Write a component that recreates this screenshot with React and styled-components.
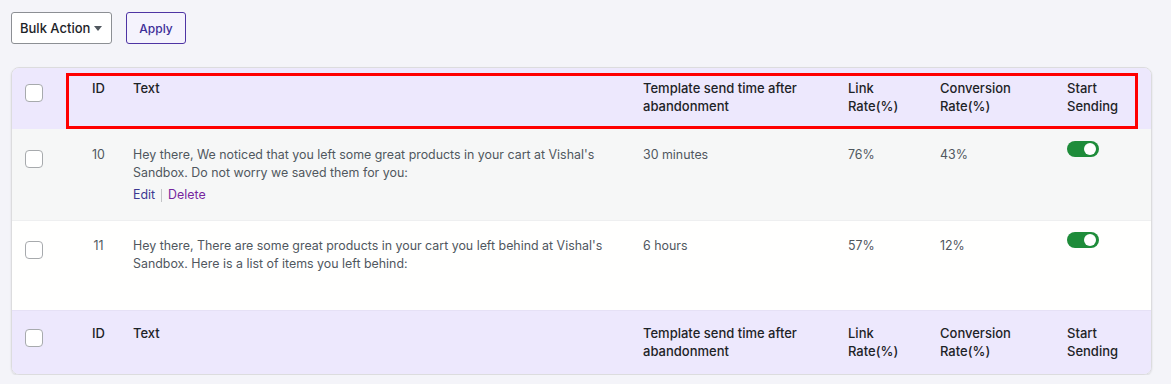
import React from 'react'
import styled, { createGlobalStyle } from 'styled-components'

const GlobalStyle = createGlobalStyle`
  body {
    margin: 0;
    background: #f4f4f9;
    font-family: Inter, "Noto Sans", Arial, sans-serif;
    -webkit-font-smoothing: antialiased;
  }
`

const Page = styled.div`
  padding: 12px 19px 0 11px;
`

const Toolbar = styled.div`
  display: flex;
  gap: 14px;
  margin-bottom: 23px;
`

const Select = styled.div`
  width: 101px;
  height: 32px;
  box-sizing: border-box;
  border: 1px solid #8c8f94;
  border-radius: 3px;
  background: #fff;
  display: flex;
  align-items: center;
  padding-left: 8px;
  gap: 2px;
  font-size: 13px;
  font-weight: 500;
  color: #1d2327;
`

const Caret = styled.span`
  width: 0;
  height: 0;
  border-left: 4px solid transparent;
  border-right: 4px solid transparent;
  border-top: 5px solid #50575e;
  margin-left: 2px;
`

const Button = styled.button`
  width: 60px;
  height: 32px;
  box-sizing: border-box;
  border: 1px solid #4e34a4;
  border-radius: 3px;
  background: #f5f3fd;
  color: #3d2d98;
  font-family: inherit;
  font-size: 12px;
  font-weight: 500;
  padding: 0;
`

const Card = styled.div`
  position: relative;
  border: 1px solid #dcdcde;
  border-radius: 8px;
  overflow: hidden;
  box-shadow: 0 1px 2px rgba(0, 0, 0, 0.12);
`

const cols = '68px 41px 510px 205px 92px 127px 1fr'

const HeadRow = styled.div`
  display: grid;
  grid-template-columns: ${cols};
  background: #ede8fd;
  padding: ${p => (p.$foot ? '13px 0 14px' : '11px 0 14px')};
  border-top: ${p => (p.$foot ? '1px solid #e6e1f6' : 'none')};
`

const Row = styled.div`
  display: grid;
  grid-template-columns: ${cols};
  background: ${p => (p.$alt ? '#f6f7f7' : '#fffffe')};
  padding: ${p => (p.$first ? '17px 0 16px' : '16px 0 15px')};
  border-top: ${p => (p.$first ? 'none' : '1px solid #eeeff0')};
`

const Cell = styled.div`
  padding-left: 12px;
  font-size: ${p => (p.$head ? '13px' : '12.4px')};
  line-height: 18px;
  font-weight: ${p => (p.$head ? 500 : 400)};
  color: ${p => (p.$head ? '#1d2327' : '#50575e')};
`

const IdCell = styled(Cell)`
  text-align: center;
  padding-left: 0;
  padding-right: 4px;
`

const CheckCell = styled.div`
  padding-left: 13px;
  padding-top: ${p => (p.$head ? 5 : 4)}px;
`

const Check = styled.span`
  display: block;
  width: 18px;
  height: 18px;
  box-sizing: border-box;
  border: 1px solid #a7aaad;
  border-radius: 4px;
  background: #fff;
`

const Actions = styled.div`
  margin-top: 4px;
  display: flex;
  align-items: center;
  visibility: ${p => (p.$hidden ? 'hidden' : 'visible')};
`

const ActionLink = styled.a`
  color: ${p => (p.$danger ? '#76269e' : '#3c3891')};
  text-decoration: none;
`

const Sep = styled.span`
  width: 1px;
  height: 13px;
  background: #c3c4c7;
  margin: 0 6px;
`

const Toggle = styled.span`
  display: block;
  width: 32px;
  height: 16px;
  margin-top: -5px;
  border-radius: 8px;
  background: #1e8c3a;
  position: relative;
  &::after {
    content: '';
    position: absolute;
    right: 3px;
    top: 2px;
    width: 12px;
    height: 12px;
    border-radius: 50%;
    background: #fff;
  }
`

const Highlight = styled.div`
  position: absolute;
  left: 54px;
  top: 5px;
  width: 1072px;
  height: 56px;
  box-sizing: border-box;
  border: 3px solid #ff0000;
  pointer-events: none;
`

const rows = [
  {
    id: 10,
    text: "Hey there, We noticed that you left some great products in your cart at Vishal's Sandbox. Do not worry we saved them for you:",
    time: '30 minutes',
    link: '76%',
    conv: '43%',
  },
  {
    id: 11,
    text: "Hey there, There are some great products in your cart you left behind at Vishal's Sandbox. Here is a list of items you left behind:",
    time: '6 hours',
    link: '57%',
    conv: '12%',
  },
]

function Head({ foot }) {
  return (
    <HeadRow $foot={foot}>
      <CheckCell $head><Check /></CheckCell>
      <IdCell $head>ID</IdCell>
      <Cell $head>Text</Cell>
      <Cell $head>Template send time after abandonment</Cell>
      <Cell $head>Link<br />Rate(%)</Cell>
      <Cell $head>Conversion<br />Rate(%)</Cell>
      <Cell $head>Start<br />Sending</Cell>
    </HeadRow>
  )
}

export default function App() {
  return (
    <Page>
      <GlobalStyle />
      <Toolbar>
        <Select>Bulk Action<Caret /></Select>
        <Button>Apply</Button>
      </Toolbar>
      <Card>
        <Head />
        {rows.map((r, i) => (
          <Row key={r.id} $alt={i === 0} $first={i === 0}>
            <CheckCell><Check /></CheckCell>
            <IdCell>{r.id}</IdCell>
            <Cell>
              {r.text}
              <Actions $hidden={i !== 0}>
                <ActionLink href="#">Edit</ActionLink>
                <Sep />
                <ActionLink href="#" $danger>Delete</ActionLink>
              </Actions>
            </Cell>
            <Cell>{r.time}</Cell>
            <Cell>{r.link}</Cell>
            <Cell>{r.conv}</Cell>
            <Cell><Toggle /></Cell>
          </Row>
        ))}
        <Head foot />
        <Highlight />
      </Card>
    </Page>
  )
}
